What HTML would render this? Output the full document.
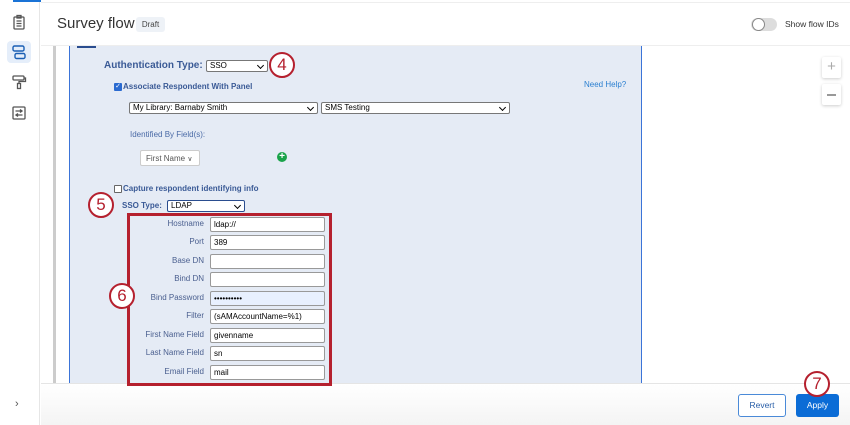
<!DOCTYPE html>
<html><head><meta charset="utf-8"><style>
*{box-sizing:border-box;margin:0;padding:0}
body{width:850px;height:425px;overflow:hidden;background:#fff;font-family:"Liberation Sans",Arial,sans-serif;position:relative}
.a{position:absolute;white-space:nowrap}
.lbl{position:absolute;font-size:8px;color:#4a5f8f;text-align:right;width:90px;left:114px}
.inp{position:absolute;left:210px;width:115px;height:15px;border:1px solid #999;background:#fff;font-size:8px;padding:2px 3px;color:#000;border-radius:2px}
.sel{position:absolute;height:12px;border:1px solid #777;background:#fff;font-size:8px;padding:0 3px;line-height:10px;color:#000;border-radius:2px}
.sel:after{content:"";position:absolute;right:4px;top:2px;width:4px;height:4px;border-right:1.5px solid #000;border-bottom:1.5px solid #000;transform:rotate(45deg)}
.circ{position:absolute;width:26px;height:26px;border:2.5px solid #b5202e;border-radius:50%;background:#fff;color:#b5202e;font-size:17px;text-align:center;line-height:21px}
</style></head><body>
<!-- footer -->
<div class="a" style="left:41px;top:383px;width:809px;height:42px;background:linear-gradient(#fff,#f4f4f4);border-top:1px solid #e5e5e5"></div>
<div class="a" style="left:738px;top:394px;width:48px;height:23px;border:1px solid #4a8ad8;border-radius:3px;background:#fff;color:#2a5fa8;font-size:8.5px;text-align:center;line-height:21px">Revert</div>
<div class="a" style="left:796px;top:394px;width:43px;height:23px;border-radius:3px;background:#0b6cd6;color:#fff;font-size:8.5px;text-align:center;line-height:23px">Apply</div>
<!-- sidebar -->
<div class="a" style="left:0;top:0;width:40px;height:425px;border-right:1px solid #e6e6e6;background:#fff"></div>
<div class="a" style="left:13px;top:0;width:28px;height:2px;background:#1a73d6"></div>
<svg class="a" style="left:11px;top:14px" width="16" height="16" viewBox="0 0 16 16" fill="none" stroke="#555" stroke-width="1.3"><rect x="3" y="3" width="10" height="12" rx="1"/><rect x="6" y="1.5" width="4" height="2.5"/><path d="M5.5 7h5M5.5 9.5h5M5.5 12h5"/></svg>
<div class="a" style="left:7px;top:41px;width:24px;height:22px;background:#e5eefa;border-radius:4px"></div>
<svg class="a" style="left:11px;top:44px" width="16" height="16" viewBox="0 0 16 16" fill="none" stroke="#1a5fb4" stroke-width="1.4"><rect x="2" y="2" width="11" height="5" rx="1.5"/><rect x="4" y="9.5" width="10" height="5" rx="1.5"/></svg>
<svg class="a" style="left:11px;top:74px" width="16" height="16" viewBox="0 0 16 16" fill="none" stroke="#555" stroke-width="1.3"><rect x="2" y="2" width="11" height="4" rx="1"/><path d="M13 4h1.5v3.5H8v2"/><rect x="6.5" y="9.5" width="3" height="5"/></svg>
<svg class="a" style="left:11px;top:105px" width="16" height="16" viewBox="0 0 16 16" fill="none" stroke="#555" stroke-width="1.3"><rect x="2" y="2" width="12" height="12" rx="1"/><path d="M4.5 6h7M4.5 10h7M9 4.5l2 1.5-2 1.5M7 8.5l-2 1.5 2 1.5"/></svg>
<div class="a" style="left:15px;top:398px;font-size:11px;color:#555">&#8250;</div>
<!-- header -->
<div class="a" style="left:41px;top:0;width:809px;height:3px;border-bottom:1px solid #eee"></div>
<div class="a" style="left:41px;top:45px;width:809px;height:1px;background:#eee"></div>
<div class="a" style="left:57px;top:15px;font-size:15px;color:#333">Survey flow</div>
<div class="a" style="left:136px;top:17px;width:29px;height:15px;background:#eef2f7;border-radius:3px;font-size:8px;color:#444;text-align:center;line-height:15px">Draft</div>
<div class="a" style="left:751px;top:18px;width:26px;height:13px;background:#ddd;border-radius:7px"></div>
<div class="a" style="left:752px;top:18px;width:13px;height:13px;background:#fff;border:1px solid #888;border-radius:50%"></div>
<div class="a" style="left:785px;top:19px;font-size:8.5px;color:#333">Show flow IDs</div>
<!-- canvas -->
<div class="a" style="left:53px;top:46px;width:3px;height:337px;background:#ccc"></div>
<div class="a" style="left:69px;top:46px;width:573px;height:337px;background:#e5ebf5;border-left:1.5px solid #3b74d8;border-right:1.5px solid #3b74d8"></div>
<div class="a" style="left:77px;top:46px;width:19px;height:2px;background:#2a4d8f"></div>
<div class="a" style="left:822px;top:57px;width:19px;height:21px;background:#fff;box-shadow:0 1px 3px rgba(0,0,0,.2);border-radius:2px;color:#aaa;font-size:15px;text-align:center;line-height:20px">+</div>
<div class="a" style="left:822px;top:84px;width:19px;height:21px;background:#fff;box-shadow:0 1px 3px rgba(0,0,0,.2);border-radius:2px"><div style="position:absolute;left:5px;top:10px;width:9px;height:1.5px;background:#999"></div></div>
<div class="a" style="left:104px;top:60px;font-size:10px;font-weight:bold;color:#3a5a96">Authentication Type:</div>
<div class="sel" style="left:206px;top:60px;width:62px">SSO</div>
<div class="a" style="left:114px;top:83px;width:8px;height:8px;background:#2a6ad0;border-radius:1px;color:#fff;font-size:7px;line-height:8px;text-align:center">&#10003;</div>
<div class="a" style="left:123px;top:82px;font-size:8px;font-weight:bold;color:#3a5a96">Associate Respondent With Panel</div>
<div class="a" style="left:584px;top:80px;font-size:8px;color:#2a7fd0">Need Help?</div>
<div class="sel" style="left:129px;top:102px;width:189px">My Library: Barnaby Smith</div>
<div class="sel" style="left:321px;top:102px;width:189px">SMS Testing</div>
<div class="a" style="left:130px;top:130px;font-size:8px;color:#4a6aa6">Identified By Field(s):</div>
<div class="a" style="left:140px;top:150px;width:60px;height:16px;background:#fff;border:1px solid #ccc;border-radius:2px;font-size:8px;color:#555;padding:3px 5px">First Name <span style="font-size:7px">&#8744;</span></div>
<div class="a" style="left:277px;top:152px;width:10px;height:10px;background:#1aa34a;border-radius:50%;color:#fff;font-size:10px;line-height:10px;text-align:center;font-weight:bold">+</div>
<div class="a" style="left:114px;top:185px;width:8px;height:8px;border:1px solid #666;background:#fff;border-radius:1px"></div>
<div class="a" style="left:123px;top:184px;font-size:8px;font-weight:bold;color:#3a5a96">Capture respondent identifying info</div>
<div class="a" style="left:122px;top:201px;font-size:8px;font-weight:bold;color:#3a5a96">SSO Type:</div>
<div class="sel" style="left:167px;top:200px;width:78px;border-color:#2a4d8f">LDAP</div>
<!-- fields -->
<div class="lbl" style="top:219px">Hostname</div><div class="inp" style="top:217px">ldap://</div>
<div class="lbl" style="top:237px">Port</div><div class="inp" style="top:235px">389</div>
<div class="lbl" style="top:256px">Base DN</div><div class="inp" style="top:254px"></div>
<div class="lbl" style="top:274px">Bind DN</div><div class="inp" style="top:272px"></div>
<div class="lbl" style="top:293px">Bind Password</div><div class="inp" style="top:291px;background:#e8f0fe">&#8226;&#8226;&#8226;&#8226;&#8226;&#8226;&#8226;&#8226;&#8226;&#8226;</div>
<div class="lbl" style="top:311px">Filter</div><div class="inp" style="top:309px">(sAMAccountName=%1)</div>
<div class="lbl" style="top:330px">First Name Field</div><div class="inp" style="top:328px">givenname</div>
<div class="lbl" style="top:348px">Last Name Field</div><div class="inp" style="top:346px">sn</div>
<div class="lbl" style="top:367px">Email Field</div><div class="inp" style="top:365px">mail</div>
<div class="a" style="left:127px;top:213px;width:205px;height:173px;border:3px solid #b5202e"></div>
<!-- circles -->
<div class="circ" style="left:269px;top:52px">4</div>
<div class="circ" style="left:88px;top:192px">5</div>
<div class="circ" style="left:109px;top:283px">6</div>
<div class="circ" style="left:804px;top:371px">7</div>
</body></html>
